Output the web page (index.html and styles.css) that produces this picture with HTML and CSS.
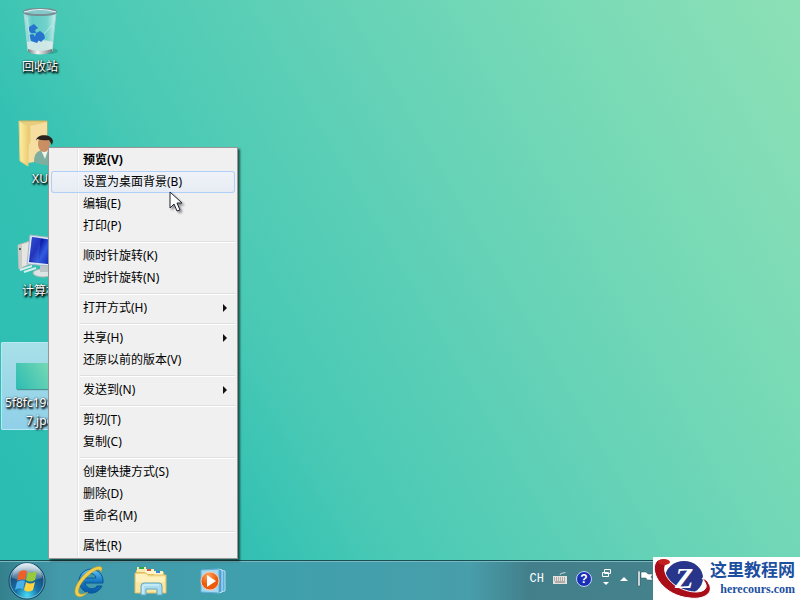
FILE: index.html
```html
<!DOCTYPE html>
<html lang="zh-CN">
<head>
<meta charset="utf-8">
<title>桌面</title>
<link rel="stylesheet" href="styles.css">
</head>
<body>
<main class="desktop">
  <button class="shortcut" type="button">
    <svg class="shortcut-icon" viewBox="0 0 48 48" aria-hidden="true">
      <defs>
        <linearGradient id="glass" x1="0" x2="1"><stop offset="0" stop-color="#d5eef0" stop-opacity=".85"/><stop offset=".25" stop-color="#78cdd2" stop-opacity=".6"/><stop offset=".7" stop-color="#8ed9d9" stop-opacity=".6"/><stop offset="1" stop-color="#e4f6f6" stop-opacity=".9"/></linearGradient>
        <linearGradient id="base" x1="0" x2="1"><stop offset="0" stop-color="#777f80"/><stop offset=".4" stop-color="#f4f4f4"/><stop offset="1" stop-color="#70797a"/></linearGradient>
      </defs>
      <ellipse cx="34" cy="43" rx="8" ry="3" fill="#176f68" opacity=".35"/>
      <path d="M8 4 12 43q12 5 24 0L40 4z" fill="url(#glass)" stroke="#a6d5d7"/>
      <path d="M11 34 12 42q12 5 24 0l1-8q-13-4-26 0z" fill="#e7eeee" opacity=".8"/>
      <path d="M12 41q12 4 24 0v3q-12 5-24 0z" fill="url(#base)"/>
      <ellipse cx="24" cy="4" rx="16" ry="3" fill="#86c8cb" stroke="#778f94" stroke-width="2"/>
      <path d="M8 4q16-5 32 0" fill="none" stroke="#eff7f7"/>
      <path d="m13 19 5-3 4 4-3 2 1 3-5 0-2-2zM20 25l4-2 4 3 1 4-4 4-3-2-3-3zM13 27l4-1 3 4 3 2-2 3-6-2z" fill="#2774cf"/>
      <path d="m28 26 8-9M11 9l3 24" fill="none" stroke="#c9eded" opacity=".8"/>
    </svg>
    <span class="shortcut-label">回收站</span>
  </button>
  <button class="shortcut" type="button">
    <svg class="shortcut-icon" viewBox="0 0 48 48" aria-hidden="true">
      <defs><linearGradient id="folder" x1="0" x2="1"><stop offset="0" stop-color="#fff0a8"/><stop offset="1" stop-color="#e8c768"/></linearGradient></defs>
      <path d="M4 1h27v40H12z" fill="#e8cd7c" stroke="#cfb260"/>
      <path d="M14 6 31 2v38l-19 3z" fill="#f5dea0"/>
      <path d="m3 1 11 6v15l-2 4v20L4 41z" fill="url(#folder)" stroke="#e7cf80"/>
      <path d="M18 42c0-8 3-11 8-12l7 1c6 2 8 6 8 12q-11 5-23-1z" fill="#7daea0"/>
      <path d="m25 30 4 9 3-9z" fill="#f1f3ed"/>
      <ellipse cx="28" cy="24" rx="6" ry="8" fill="#c98e61"/>
      <path d="M20 21c0-7 15-8 17 0l-1 4-3-5q-6 1-12-1z" fill="#29221d"/>
    </svg>
    <span class="shortcut-label">XU</span>
  </button>
  <button class="shortcut" type="button">
    <svg class="shortcut-icon" viewBox="0 0 48 48" aria-hidden="true">
      <defs><linearGradient id="screen" x2="1" y2=".5"><stop offset="0" stop-color="#2038d8"/><stop offset=".35" stop-color="#0712a4"/><stop offset=".6" stop-color="#315cdf"/><stop offset="1" stop-color="#0615a2"/></linearGradient></defs>
      <path d="m2 13 12-4v23L3 37z" fill="#e5e5e2" stroke="#b4b8b5"/>
      <path d="m2 13 4-1v24l-3 1z" fill="#c8cbc8"/>
      <circle cx="4" cy="17" r="1" fill="#315337"/>
      <path d="m4 38 12-4M8 40l12-4" stroke="#d8eeea" stroke-width="2"/>
      <ellipse cx="27" cy="41" rx="10" ry="4" fill="#dce4e4" stroke="#adb7b8"/>
      <path d="M24 31h8v9h-8z" fill="#bdc6c7"/>
      <path d="m14 3 32 4-3 28-32-3z" fill="#dfe8f2" stroke="#a7b6c5"/>
      <path d="m16 5 28 4-3 24-28-3z" fill="url(#screen)"/>
      <path d="m16 5 9 1-3 24-9-1z" fill="#5578e6" opacity=".35"/>
    </svg>
    <span class="shortcut-label">计算机</span>
  </button>
  <button class="shortcut selected" type="button">
    <span class="shortcut-icon"><span class="thumbnail"></span></span>
    <span class="shortcut-label">5f8fc19d6b8<br>7.jpg</span>
  </button>

  <div class="menu" role="menu">
    <button class="item default" type="button" role="menuitem">预览(V)</button>
    <button class="item active" type="button" role="menuitem">设置为桌面背景(B)</button>
    <button class="item" type="button" role="menuitem">编辑(E)</button>
    <button class="item" type="button" role="menuitem">打印(P)</button>
    <hr class="separator">
    <button class="item" type="button" role="menuitem">顺时针旋转(K)</button>
    <button class="item" type="button" role="menuitem">逆时针旋转(N)</button>
    <hr class="separator">
    <button class="item submenu" type="button" role="menuitem">打开方式(H)</button>
    <hr class="separator">
    <button class="item submenu" type="button" role="menuitem">共享(H)</button>
    <button class="item" type="button" role="menuitem">还原以前的版本(V)</button>
    <hr class="separator">
    <button class="item submenu" type="button" role="menuitem">发送到(N)</button>
    <hr class="separator">
    <button class="item" type="button" role="menuitem">剪切(T)</button>
    <button class="item" type="button" role="menuitem">复制(C)</button>
    <hr class="separator">
    <button class="item" type="button" role="menuitem">创建快捷方式(S)</button>
    <button class="item" type="button" role="menuitem">删除(D)</button>
    <button class="item" type="button" role="menuitem">重命名(M)</button>
    <hr class="separator">
    <button class="item" type="button" role="menuitem">属性(R)</button>
  </div>
  <svg class="cursor" viewBox="0 0 16 22" aria-hidden="true">
    <path d="M1 1v16l4-4 3 7 3-1-3-7h5z" fill="#fff" stroke="#1d2430"/>
  </svg>
</main>

<footer class="taskbar">
  <button class="start" type="button" aria-label="开始">
    <svg width="40" height="40" viewBox="0 0 40 40" aria-hidden="true">
      <defs>
        <radialGradient id="orb" cx=".5" cy=".9" r=".8"><stop offset="0" stop-color="#48dcf4"/><stop offset=".4" stop-color="#1673a8"/><stop offset=".8" stop-color="#174d7c"/><stop offset="1" stop-color="#6c9cb9"/></radialGradient>
        <linearGradient id="shine" x2="0" y2="1"><stop offset="0" stop-color="#fff" stop-opacity=".8"/><stop offset="1" stop-color="#fff" stop-opacity=".15"/></linearGradient>
      </defs>
      <circle cx="20" cy="20" r="18" fill="url(#orb)" stroke="#153f60"/>
      <circle cx="20" cy="20" r="17" fill="none" stroke="#a9d3df" opacity=".6"/>
      <path d="M5 17a15 15 0 0 1 30 0q-15 5-30 0z" fill="url(#shine)"/>
      <path d="M12 11q4-3 8-1l-2 9q-4-2-8 1z" fill="#ed6129"/>
      <path d="M21 11q4 2 9-1l-2 9q-5 3-9 0z" fill="#98cb3b"/>
      <path d="M10 21q4-3 8-1l-2 8q-4-2-8 1z" fill="#4bb1ed"/>
      <path d="M19 21q4 3 9 0l-2 8q-5 3-9 0z" fill="#ffd33d"/>
    </svg>
  </button>
  <button class="task" type="button" aria-label="Internet Explorer">
    <svg width="34" height="34" viewBox="0 0 34 34" aria-hidden="true">
      <defs><linearGradient id="ie" x2="0" y2="1"><stop offset="0" stop-color="#66c9f4"/><stop offset=".5" stop-color="#1678c2"/><stop offset="1" stop-color="#0858a4"/></linearGradient></defs>
      <path d="M25 22h5a12 12 0 1 1 1-6v3H13c1 6 9 8 12 3zM13 14h11c-1-6-10-6-11 0z" fill="url(#ie)" fill-rule="evenodd" stroke="#0b5698"/>
      <path d="M5 32C-1 28 7 13 18 6c6-4 12-5 12-1l-1 3c-1-4-6-2-11 2C8 18 4 28 8 30q3 1 8-2c-4 4-8 6-11 4z" fill="#f2cd48" stroke="#c99c28" stroke-width=".5"/>
    </svg>
  </button>
  <button class="task" type="button" aria-label="Windows 资源管理器">
    <svg width="34" height="34" viewBox="0 0 34 34" aria-hidden="true">
      <path d="M2 6h10l2 2h16v20H2z" fill="#e5bd55"/>
      <path d="M3 3h9v5H3z" fill="#f6eab2"/><path d="M5 3h5v2H5z" fill="#31a54a"/>
      <path d="M11 5h9v5h-9z" fill="#fff5cc"/><path d="M13 5h4v2h-4z" fill="#dc5036"/>
      <path d="M20 7h9v5h-9z" fill="#fff5cc"/><path d="M22 7h4v2h-4z" fill="#3387d7"/>
      <path d="M1 9h11l2 2h18v18H1z" fill="#f9e6a0" stroke="#e0bf69"/>
      <path d="M2 10h9l3 3h17v5H2z" fill="#fff5c9" opacity=".7"/>
      <path d="M7 31V22q0-3 3-3h15q3 0 3 3v9h-5v-6H12v6z" fill="#a8dcee" stroke="#61a9c7"/>
      <path d="M9 30v-8q0-1 2-1h14" fill="none" stroke="#e0f8ff" stroke-width="1"/>
    </svg>
  </button>
  <button class="task" type="button" aria-label="Windows Media Player">
    <svg width="34" height="34" viewBox="0 0 34 34" aria-hidden="true">
      <defs><radialGradient id="play" cx=".4" cy=".2"><stop offset="0" stop-color="#ffa15b"/><stop offset="1" stop-color="#ec5b0b"/></radialGradient></defs>
      <path d="m24 6 5 1v20l-5 1z" fill="#5daedf" stroke="#b2ddf2"/>
      <path d="m22 5 4 1v22l-4 1z" fill="#4c9bd0" stroke="#c4e8f7"/>
      <path d="m5 6 18-1v24L5 28z" fill="#a6d8f1" stroke="#62aed8"/>
      <circle cx="14" cy="17" r="9" fill="url(#play)" stroke="#f6cdae"/>
      <path d="m11 11 9 6-9 6z" fill="#fff"/>
    </svg>
  </button>
  <div class="tray">
    <span class="language">CH</span>
    <svg width="14" height="14" viewBox="0 0 14 14" aria-hidden="true"><path d="M7 3q0-2 3-2t2-1" fill="none" stroke="#c9d6d6"/><path d="M0 4h14v8H0z" fill="#e3e2dc"/><path d="M1 6h12M1 8h12" stroke="#777" stroke-dasharray="1 1"/><path d="M2 10h10" stroke="#777"/></svg>
    <span class="help">?</span>
    <svg width="10" height="20" viewBox="0 0 10 20" aria-hidden="true"><path d="M3.500 .5h6v4h-6zM1.500 3.500h6v4h-6z" fill="#4a8690" stroke="#fff"/><path d="M2 13h6l-3 3z" fill="#fff"/></svg>
    <svg width="8" height="14" viewBox="0 0 8 14" aria-hidden="true"><path d="m0 9 4-4 4 4z" fill="#fff"/></svg>
    <svg width="16" height="16" viewBox="0 0 16 16" aria-hidden="true"><path d="M1 0h2v15H1z" fill="#fff" stroke="#284e56" stroke-width=".5"/><path d="M4 1h5l2 2h5l-2 3 2 3h-6L9 7H4z" fill="#fff" stroke="#31545b" stroke-width=".5"/></svg>
  </div>
</footer>

<aside class="brand">
  <svg width="57" height="43" viewBox="0 0 57 43" aria-hidden="true">
    <ellipse cx="31" cy="21" rx="19" ry="17" fill="#27358a"/>
    <path d="M15 5C12 1 6 1 3 5c-7 11 8 34 34 36 15 2 24-6 19-14-1-3-4-5-7-6 4 5 6 9 2 12-9 6-35-2-39-18-1-5 0-7 3-10z" fill="#a90d18" stroke="#fff"/>
    <ellipse cx="11" cy="5" rx="6" ry="3" fill="#c32020"/>
    <text class="brand-letter" x="22" y="31">Z</text>
  </svg>
  <div class="brand-text">
    <strong class="brand-name">这里教程网</strong>
    <span class="brand-site">herecours.com</span>
  </div>
</aside>
</body>
</html>
```
FILE: styles.css
```css
* {
  box-sizing: border-box;
}

body {
  display: flex;
  flex-direction: column;
  min-height: 100vh;
  margin: 0;
  font: 12px/18px "Noto Sans", "Noto Sans CJK SC", sans-serif;
  background: linear-gradient(60deg, #29bcb2 0%, #34c1b3 25%, #49c9b5 36%, #68d3b7 62%, #78dab6 78%, #8de0b6 100%);
}

button {
  margin: 0;
  padding: 0;
  border: 0;
  font: inherit;
  background: none;
}

.desktop {
  position: relative;
  flex: 1;
  display: flex;
  flex-direction: column;
  align-items: flex-start;
  gap: 24px;
  padding: 6px 0 0 1px;
}

.shortcut {
  display: flex;
  flex-direction: column;
  align-items: center;
  gap: 2px;
  width: 78px;
  min-height: 88px;
  padding-top: 2px;
  color: #fff;
  text-shadow: 1px 1px 2px #000, 1px 2px 2px #000, 0 0 2px rgba(0, 0, 0, 0.6);
}

.shortcut.selected {
  border-radius: 2px;
  background: linear-gradient(#a9e0e8, #8fcfe8);
  box-shadow: inset 0 0 0 1px #b8e8f4;
}

.shortcut-icon {
  display: flex;
  align-items: center;
  width: 48px;
  height: 48px;
}

.thumbnail {
  width: 48px;
  height: 26px;
  margin-top: 16px;
  background: linear-gradient(60deg, #2cbcb2, #90e2b6);
  box-shadow: 1px 1px 1px #4f8f96;
}

.menu {
  position: absolute;
  top: 147px;
  left: 48px;
  width: 190px;
  padding: 1px 2px;
  border: 1px solid #979797;
  background: linear-gradient(90deg, #f0f0f0 29px, #e2e3e3 29px, #e2e3e3 30px, #fff 30px, #fff 31px, #f0f0f0 31px) content-box, #f0f0f0;
  background-origin: border-box;
  box-shadow: 2px 2px 2px rgba(0, 0, 0, 0.6);
}

.item {
  display: flex;
  align-items: center;
  width: 100%;
  height: 22px;
  padding: 0 8px 0 32px;
  color: #000;
}

.item.default {
  font-weight: 700;
}

.item.active {
  border-radius: 3px;
  background: linear-gradient(rgba(240, 244, 250, 0.7), rgba(226, 234, 246, 0.7));
  box-shadow: inset 0 0 0 1px #aecff7;
}

.item.submenu::after {
  content: "";
  margin-left: auto;
  border: 4px solid transparent;
  border-right: 0;
  border-left-color: #111;
}

.separator {
  height: 2px;
  margin: 4px 0 2px 29px;
  border: 0;
  border-top: 1px solid #dfdfdf;
  background: #fff;
}

.cursor {
  position: absolute;
  top: 191px;
  left: 169px;
  width: 16px;
  height: 22px;
  filter: drop-shadow(2px 2px 1px rgba(0, 0, 0, 0.4));
}

.taskbar {
  display: flex;
  align-items: center;
  height: 40px;
  border-top: 1px solid #164f56;
  background: linear-gradient(90deg, #34818d 0, #439aaa 60px, #3fa0ac 280px, #489eab 470px, #427f8a 530px, #47858f 100%);
  box-shadow: inset 0 1px 0 #79b9c0;
}

.start {
  display: flex;
  justify-content: center;
  width: 54px;
}

.task {
  display: flex;
  justify-content: center;
  width: 62px;
  margin-left: 4px;
  margin-right: -4px;
}

.tray {
  display: flex;
  align-items: center;
  gap: 9px;
  margin-left: auto;
  margin-right: 147px;
  padding-bottom: 4px;
  color: #fff;
}

.language {
  font: 12px/18px "Liberation Mono", monospace;
}

.help {
  width: 16px;
  height: 16px;
  border: 1px solid #bfd3f4;
  border-radius: 50%;
  background: #1b2fb6;
  font: bold 12px/14px "Liberation Sans", sans-serif;
  text-align: center;
}

.brand {
  position: absolute;
  right: 0;
  bottom: 0;
  display: flex;
  width: 147px;
  height: 43px;
  overflow: hidden;
  background: #fff;
}

.brand-letter {
  fill: #fff;
  font: italic bold 30px "Liberation Serif", serif;
}

.brand-text {
  display: flex;
  flex-direction: column;
  align-items: flex-end;
  color: #1c4f9f;
}

.brand-name {
  font: bold 17px/24px "Noto Sans CJK SC", sans-serif;
}

.brand-site {
  font: bold 12px/16px "Liberation Serif", serif;
}
```
